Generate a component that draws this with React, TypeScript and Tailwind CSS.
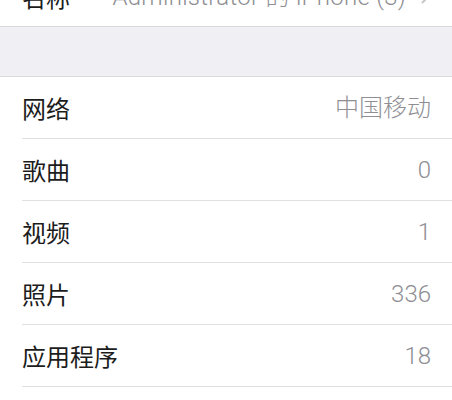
import React from "react";

const rows: [string, string][] = [
  ["网络", "中国移动"],
  ["歌曲", "0"],
  ["视频", "1"],
  ["照片", "336"],
  ["应用程序", "18"],
];

export default function App() {
  return (
    <div className="w-[452px] h-[400px] overflow-hidden bg-white" style={{ fontFamily: '"Noto Sans CJK SC", sans-serif' }}>
      <div className="-mt-[32px] h-[59px] flex items-center pl-[22px] pr-[22px] border-b border-[#d9d9dd]">
        <span className="text-[24px] text-[#1c1c1c] leading-none">名称</span>
        <span className="ml-auto text-[24px] text-[#8e8e93] font-light leading-none tracking-[0.3px]" style={{ fontFamily: 'Roboto, "Noto Sans CJK SC", sans-serif' }}>
          Administrator 的 iPhone (3)
        </span>
        <svg width="10" height="16" viewBox="0 0 10 16" className="ml-[14px]">
          <path d="M2 2 L8 8 L2 14" fill="none" stroke="#c7c7cc" strokeWidth="2" />
        </svg>
      </div>
      <div className="h-[50px] bg-[#efeff4] border-b border-[#d9d9dd]" />
      <div>
        {rows.map(([l, v]) => (
          <div key={l} className="ml-[22px] h-[62px] flex items-center pr-[21px] border-b border-[#e0e0e3]">
            <span className="text-[24px] text-[#1c1c1c] leading-none">{l}</span>
            <span className="ml-auto text-[24px] text-[#8e8e93] font-light leading-none" style={{ fontFamily: 'Roboto, "Noto Sans CJK SC", sans-serif' }}>
              {v}
            </span>
          </div>
        ))}
      </div>
    </div>
  );
}
